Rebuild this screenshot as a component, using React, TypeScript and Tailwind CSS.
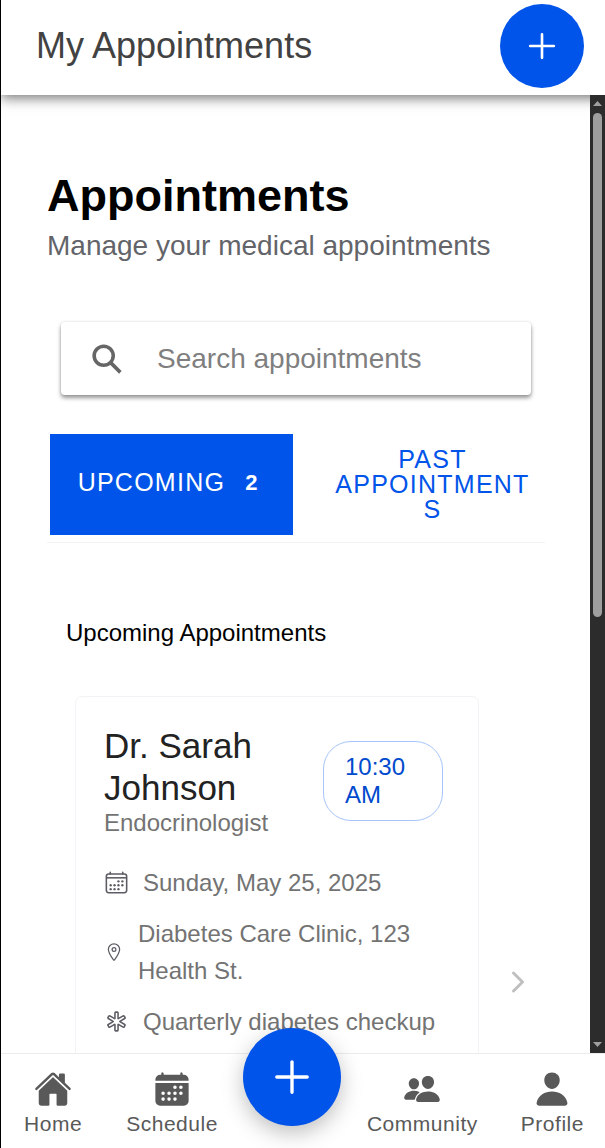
import type { ReactNode } from "react";
import {
  IoAdd,
  IoCalendar,
  IoCalendarOutline,
  IoChevronForward,
  IoHome,
  IoLocationOutline,
  IoMedicalOutline,
  IoPeople,
  IoPerson,
  IoSearchSharp,
} from "react-icons/io5";

function Header() {
  return (
    <header className="relative z-10 flex h-[95px] shrink-0 items-center justify-between bg-white pr-[21px] pb-1 pl-[35px] shadow-[0_3px_12px_rgba(0,0,0,0.55)]">
      <h1 className="text-[36px] leading-[42px] text-[#424242]">My Appointments</h1>
      <button
        type="button"
        aria-label="New appointment"
        className="flex size-[84px] items-center justify-center rounded-full bg-[#0054e9] text-white"
      >
        <IoAdd className="size-[42px]" />
      </button>
    </header>
  );
}

function SearchBox() {
  return (
    <label className="mx-[14px] flex h-[73px] items-center rounded bg-white pr-4 pl-[28px] shadow-[0_3px_4px_rgba(0,0,0,0.4),0_0_3px_rgba(0,0,0,0.12)]">
      <IoSearchSharp className="size-9 shrink-0 text-[#666666]" />
      <input
        type="text"
        aria-label="Search appointments"
        placeholder="Search appointments"
        className="ml-8 w-full min-w-0 bg-transparent text-[28px] leading-8 outline-none placeholder:text-[#7f7f7f]"
      />
    </label>
  );
}

function Tabs() {
  return (
    <div className="grid grid-cols-2 gap-[6px] border-b border-[#f2f2f2] px-[3px] pb-[7px] text-[25px] leading-[25px] tracking-wider">
      <button
        type="button"
        className="flex h-[101px] min-w-0 items-center justify-center gap-5 bg-[#0054e9] pb-1 text-white"
      >
        <span>UPCOMING</span>
        <span className="pr-2 text-[22px] font-bold tracking-normal">2</span>
      </button>
      <button type="button" className="h-[101px] min-w-0 pr-3 pl-9 wrap-break-word text-[#0054e9]">
        PAST APPOINTMENTS
      </button>
    </div>
  );
}

function Detail({ icon, children }: { icon: ReactNode; children: ReactNode }) {
  return (
    <li className="flex items-center gap-[14px]">
      <span className="shrink-0 text-[#5c5c64]">{icon}</span>
      <span>{children}</span>
    </li>
  );
}

function AppointmentCard() {
  return (
    <article className="mr-[11px] ml-7 flex items-center">
      <div className="h-[572px] min-w-0 flex-1 rounded-[7px] border border-[#f2f3f6] pt-7 pr-[35px] pl-7">
        <div className="flex items-center justify-between gap-4">
          <div>
            <h3 className="text-[35px] leading-[42px] text-[#222222]">Dr. Sarah Johnson</h3>
            <p className="text-[24px] leading-[28px] text-[#737373]">Endocrinologist</p>
          </div>
          <span className="w-[120px] shrink-0 rounded-[28px] border border-[#a6c4f8] py-[11px] pr-6 pl-[21px] text-[24px] leading-[28px] text-[#004acd]">
            10:30 AM
          </span>
        </div>
        <ul className="-mr-4 mt-[27px] flex flex-col gap-[14px] text-[24px] leading-[37px] text-[#737373]">
          <Detail icon={<IoCalendarOutline className="size-[25px]" />}>Sunday, May 25, 2025</Detail>
          <Detail icon={<IoLocationOutline className="size-5" />}>Diabetes Care Clinic, 123 Health St.</Detail>
          <Detail icon={<IoMedicalOutline className="size-[25px]" />}>Quarterly diabetes checkup</Detail>
        </ul>
      </div>
      <IoChevronForward className="ml-[23px] size-8 shrink-0 text-[#bfbfbf]" />
    </article>
  );
}

function Scrollbar() {
  return (
    <div aria-hidden="true" className="relative z-20 flex w-[15px] shrink-0 flex-col items-center bg-[#2c2c2c] py-[6px]">
      <svg viewBox="0 0 9 5" className="h-[5px] w-[9px] shrink-0 fill-[#9f9f9f]">
        <path d="M0 5 4.500 0 9 5z" />
      </svg>
      <span className="mt-[7px] h-[504px] w-[9px] rounded-full bg-[#9f9f9f]" />
      <svg viewBox="0 0 9 5" className="mt-auto h-[5px] w-[9px] shrink-0 fill-[#9f9f9f]">
        <path d="M0 0h9L4.500 5z" />
      </svg>
    </div>
  );
}

function NavLink({ icon, label }: { icon: ReactNode; label: string }) {
  return (
    <a href="#" className="flex flex-col items-center gap-1">
      {icon}
      <span>{label}</span>
    </a>
  );
}

function BottomNav() {
  return (
    <nav className="relative z-30 flex h-[95px] shrink-0 items-start justify-between border-t border-[#ececec] bg-white pr-[21px] pl-[23px] text-[21px] leading-6 tracking-wide text-[#595959]">
      <div className="flex gap-11 pt-4">
        <NavLink icon={<IoHome className="size-[38px]" />} label="Home" />
        <NavLink icon={<IoCalendar className="size-[38px]" />} label="Schedule" />
      </div>
      <button
        type="button"
        aria-label="Add"
        className="-mt-[26px] flex size-[98px] shrink-0 items-center justify-center rounded-full bg-[#0054e9] text-white shadow-[0_7px_21px_rgba(0,0,0,0.25)]"
      >
        <IoAdd className="size-[54px]" />
      </button>
      <div className="flex gap-[43px] pt-4">
        <NavLink icon={<IoPeople className="size-[38px]" />} label="Community" />
        <NavLink icon={<IoPerson className="size-[38px]" />} label="Profile" />
      </div>
    </nav>
  );
}

export default function App() {
  return (
    <div className="flex h-screen flex-col overflow-hidden border-l border-black bg-white font-['Liberation_Sans',Arial,sans-serif]">
      <Header />
      <div className="flex min-h-0 flex-1">
        <main className="min-w-0 flex-1 overflow-hidden pt-[74px] pr-[45px] pl-[46px]">
          <h2 className="text-[45px] leading-[54px] font-bold text-black">Appointments</h2>
          <p className="mt-[7px] text-[28px] leading-8 text-[#636469]">Manage your medical appointments</p>
          <div className="mt-[60px]">
            <SearchBox />
          </div>
          <div className="mt-[39px]">
            <Tabs />
          </div>
          <section>
            <h2 className="mt-[75px] mb-[49px] ml-[19px] text-[24px] leading-[29px] text-black">
              Upcoming Appointments
            </h2>
            <AppointmentCard />
          </section>
        </main>
        <Scrollbar />
      </div>
      <BottomNav />
    </div>
  );
}
